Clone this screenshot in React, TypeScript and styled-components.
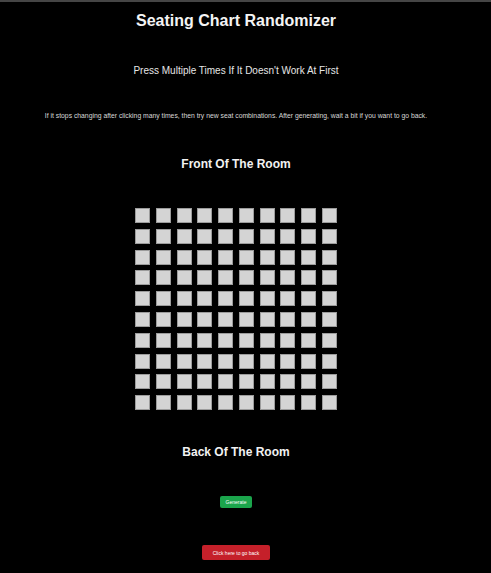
import React from 'react'
import styled, { createGlobalStyle } from 'styled-components'

const GlobalStyle = createGlobalStyle`
  html, body {
    margin: 0;
    padding: 0;
    background: #000;
  }
  body {
    font-family: "Liberation Sans", Arial, sans-serif;
    color: #fff;
    border-top: 2px solid #454545;
  }
`

const ROWS = 10
const COLS = 10

const App = () => {
  const seats = Array.from({ length: ROWS * COLS }, (_, i) => i)

  return (
    <>
      <GlobalStyle />
      <Page>
        <Title>Seating Chart Randomizer</Title>
        <Subtitle>Press Multiple Times If It Doesn&apos;t Work At First</Subtitle>
        <Note>
          If it stops changing after clicking many times, then try new seat combinations. After generating, wait a bit if
          you want to go back.
        </Note>

        <RoomLabel>Front Of The Room</RoomLabel>
        <SeatGrid>
          {seats.map((i) => (
            <Seat key={i} />
          ))}
        </SeatGrid>
        <RoomLabel $back>Back Of The Room</RoomLabel>

        <Button $color="#1ba54c" $size="small">
          Generate
        </Button>
        <Button $color="#c5202a" $size="large">
          Click here to go back
        </Button>
      </Page>
    </>
  )
}

export default App

const Page = styled.div`
  width: 472px;
  min-height: 571px;
  display: flex;
  flex-direction: column;
  align-items: center;
  text-align: center;
`

const Title = styled.h1`
  margin: 9px 0 0;
  font-size: 16px;
  line-height: 20px;
  font-weight: 700;
  color: #f4f4f4;
`

const Subtitle = styled.p`
  margin: 33px 0 0;
  font-size: 10px;
  line-height: 14px;
  color: #e6e6e6;
`

const Note = styled.p`
  margin: 34px 0 0;
  font-size: 6.8px;
  line-height: 8px;
  color: #d8d8d8;
  white-space: nowrap;
`

const RoomLabel = styled.h2<{ $back?: boolean }>`
  margin: ${(p) => (p.$back ? '34px 0 0' : '36px 0 0')};
  font-size: 12px;
  line-height: 16px;
  font-weight: 700;
  color: #f2f2f2;
`

const SeatGrid = styled.div`
  margin-top: 36px;
  display: grid;
  grid-template-columns: repeat(${COLS}, 15px);
  grid-auto-rows: 15px;
  gap: 5.8px;
`

const Seat = styled.div`
  box-sizing: border-box;
  background: #d4d4d4;
  border: 1px solid #9c9c9c;
`

const Button = styled.button<{ $color: string; $size: 'small' | 'large' }>`
  border: none;
  border-radius: 2px;
  background: ${(p) => p.$color};
  color: #fff;
  font-family: "Liberation Sans", Arial, sans-serif;
  font-size: 5px;
  padding: 0;
  cursor: pointer;
  width: ${(p) => (p.$size === 'small' ? '32px' : '68px')};
  height: ${(p) => (p.$size === 'small' ? '12px' : '15px')};
  margin-top: ${(p) => (p.$size === 'small' ? '36px' : '37px')};
`
